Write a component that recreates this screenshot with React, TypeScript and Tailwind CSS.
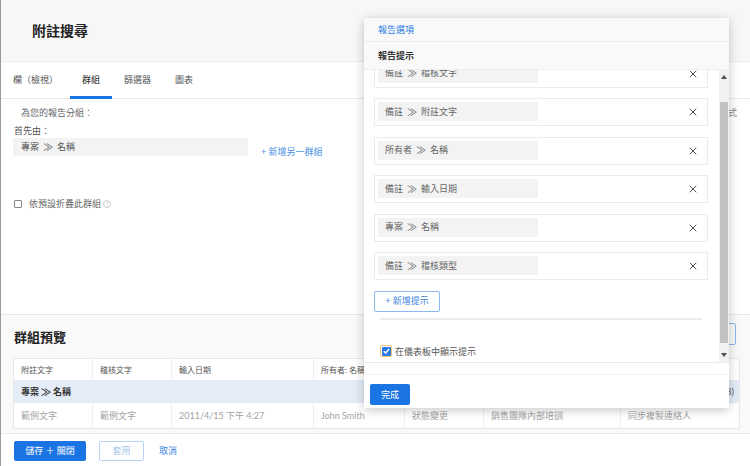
import { X } from "lucide-react";

const BLUE = "bg-[#1b74e4]";

const HINTS = [
  ["備註", "稽核文字"],
  ["備註", "附註文字"],
  ["所有者", "名稱"],
  ["備註", "輸入日期"],
  ["專案", "名稱"],
  ["備註", "稽核類型"],
];

const COLS = ["附註文字", "稽核文字", "輸入日期", "所有者: 名稱", "稽核類型", "專案: 名稱", "主旨"];
const ROW = ["範例文字", "範例文字", "2011/4/15 下午 4:27", "John Smith", "狀態變更", "銷售團隊內部培訓", "同步複製連絡人"];

function Path({ a, b }: { a: string; b: string }) {
  return (
    <span className="flex items-center">
      {a}
      <span className="px-[4px] text-[10px] leading-none font-['Noto_Sans_CJK_TC',sans-serif]">≫</span>
      {b}
    </span>
  );
}

function Tabs() {
  const tabs = ["欄（檢視）", "群組", "篩選器", "圖表"];
  return (
    <nav className="h-[37px] shrink-0 flex border-b border-[#e9e9e9] bg-white">
      {tabs.map((t, i) => (
        <div
          key={t}
          className={`relative h-full flex items-center px-3 text-[9px] ${i === 1 ? "text-[#222]" : "text-[#555]"}`}
        >
          {t}
          {i === 1 && <span className="absolute left-0 right-0 bottom-[-1px] h-[3px] bg-[#1b74e4]" />}
        </div>
      ))}
    </nav>
  );
}

function Triangle({ up }: { up?: boolean }) {
  return (
    <svg width="6" height="4" viewBox="0 0 6 4">
      <path d={up ? "M0 4 L3 0 L6 4 Z" : "M0 0 L6 0 L3 4 Z"} fill="#505050" />
    </svg>
  );
}

function OptionsPanel() {
  return (
    <div className="absolute left-[363px] top-[18px] w-[365px] h-[390px] bg-white flex flex-col shadow-[0_2px_10px_rgba(0,0,0,0.22)]">
      <div className="h-[24px] shrink-0 bg-[#f9f9f9] border-b border-[#ececec] flex items-center pl-[14px] text-[9px] text-[#2a7ae2]">
        報告選項
      </div>
      <div className="h-[28px] shrink-0 bg-[#f9f9f9] border-b border-[#efefef] flex items-center pl-[14px] text-[9px] font-bold text-[#333]">
        報告提示
      </div>

      <div className="h-[292px] shrink-0 flex">
        <div className="flex-1 overflow-hidden pl-[10px] pr-[11px]">
          <div className="mt-[-10.5px] flex flex-col gap-[10.5px]">
            {HINTS.map(([a, b]) => (
              <div key={a + b} className="h-[28px] border border-[#ebebeb] flex items-start justify-between pt-[3px] pl-[3px] pr-[8px]">
                <div className="w-[160px] h-[19px] bg-[#f3f3f3] flex items-center pl-[7px] text-[9px] text-[#666]">
                  <Path a={a} b={b} />
                </div>
                <X size={12} strokeWidth={1.7} className="text-[#333] mt-[4px]" />
              </div>
            ))}
          </div>
          <button className="mt-[10.5px] w-[66px] h-[21px] border border-[#8cb8ef] rounded-[2px] text-[9px] text-[#3a85e0] flex items-center justify-center">
            + 新增提示
          </button>
          <div className="mt-[6px] ml-[6px] w-[322px] h-[2px] bg-[#ececec]" />
          <div className="mt-[25px] ml-[6px] flex items-center gap-[3px] text-[9px] text-[#555]">
            <span className="w-[12px] h-[12px] rounded-[2px] border border-[#f2c46e] flex items-center justify-center">
              <span className="w-[9px] h-[9px] rounded-[1px] bg-[#2a7ae2] flex items-center justify-center">
                <svg width="7" height="6" viewBox="0 0 7 6">
                  <path d="M0.8 3.2 L2.7 5 L6.2 0.9" fill="none" stroke="white" strokeWidth="1.4" />
                </svg>
              </span>
            </span>
            在儀表板中顯示提示
          </div>
        </div>
        <div className="w-[10px] bg-[#f1f1f1] flex flex-col items-center">
          <div className="h-[14px] flex items-center justify-center"><Triangle up /></div>
          <div className="h-[18px]" />
          <div className="w-[8px] h-[241px] bg-[#c1c1c1]" />
          <div className="flex-1" />
          <div className="h-[14px] flex items-center justify-center"><Triangle /></div>
        </div>
      </div>

      <div className="h-[12px] shrink-0 border-t border-[#ebebeb]" />
      <div className="flex-1 border-t border-[#f0f0f0] pl-[6px] pt-[5px]">
        <button className={`w-[40px] h-[21px] ${BLUE} rounded-[2px] text-[9px] text-white`}>完成</button>
      </div>
    </div>
  );
}

export default function App() {
  return (
    <div className="relative w-[750px] h-[466px] overflow-hidden bg-white border-l border-[#9a9a9a] flex flex-col font-['Lato','Noto_Sans_CJK_TC',sans-serif]">
      <header className="h-[62px] shrink-0 bg-[#f7f7f7] border-b border-[#ececec] flex items-center pl-[31px]">
        <h1 className="text-[14px] font-bold text-[#222]">附註搜尋</h1>
      </header>

      <Tabs />

      <section className="h-[215px] shrink-0 bg-white">
        <div className="flex justify-between pt-[8px] pl-[20px] pr-[13px] text-[9px] leading-[12px] text-[#666]">
          <span>為您的報告分組：</span>
          <span className="text-[#888]">切換到文字模式</span>
        </div>
        <p className="mt-[6px] pl-[13px] text-[9px] leading-[12px] text-[#555]">首先由：</p>
        <div className="mt-[1px] pl-[12px] flex items-start gap-[13px]">
          <div className="w-[235px] h-[18px] bg-[#f3f3f3] flex items-center pl-[8px] text-[9px] text-[#555]">
            <Path a="專案" b="名稱" />
          </div>
          <span className="mt-[8px] text-[9px] leading-[12px] text-[#4a8fe3]">+ 新增另一群組</span>
        </div>
        <div className="mt-[40px] pl-[13px] flex items-center gap-[7px] text-[9px] leading-[12px] text-[#666]">
          <span className="w-[8px] h-[8px] border border-[#888] rounded-[1px]" />
          <span className="flex items-center gap-[2px]">
            依預設折疊此群組
            <span className="w-[8px] h-[8px] rounded-full border border-[#ccc] text-[6px] leading-none text-[#bbb] flex items-center justify-center">?</span>
          </span>
        </div>
      </section>

      <section className="h-[119px] shrink-0 bg-[#f9f9f9] border-t border-[#e9e9e9]">
        <div className="h-[30px] pt-[8px] pl-[13px] pr-[14px] flex items-start justify-between">
          <h2 className="mt-[5px] text-[13px] leading-[18px] font-bold text-[#222]">群組預覽</h2>
          <button className="w-[60px] h-[22px] border border-[#8cb8ef] rounded-[2px] text-[9px] text-[#3a85e0]">編輯</button>
        </div>
        <div className="mt-[13px] ml-[12px] w-[727px] border border-[#e8e8e8] bg-white">
          <div className="h-[21px] grid grid-cols-[79px_79px_142px_91px_79px_137px_1fr]">
            {COLS.map((c) => (
              <div key={c} className="border-r border-[#eee] last:border-r-0 flex items-center pl-[7px] text-[8px] text-[#555]">{c}</div>
            ))}
          </div>
          <div className="h-[23px] bg-[#e3ecf7] flex items-center justify-between pl-[7px] pr-[5px] text-[9px] font-bold text-[#333]">
            <span className="flex items-center">專案<span className="px-[2px] text-[10px] leading-none font-['Noto_Sans_CJK_TC',sans-serif]">≫</span>名稱</span>
            <span className="font-normal text-[#555]">(3)</span>
          </div>
          <div className="h-[25px] grid grid-cols-[79px_79px_142px_91px_79px_137px_1fr]">
            {ROW.map((c, i) => (
              <div key={i} className="border-r border-[#eee] last:border-r-0 flex items-center pl-[7px] text-[9px] text-[#a3a3a3]">{c}</div>
            ))}
          </div>
        </div>
      </section>

      <footer className="flex-1 bg-white border-t border-[#e9e9e9] pt-[7px] pl-[13px] flex items-start">
        <button className={`w-[72px] h-[20px] ${BLUE} rounded-[2px] text-[9px] text-white`}>儲存 ＋ 關閉</button>
        <button className="ml-[13px] w-[45px] h-[20px] border border-[#b7d2f3] rounded-[2px] text-[9px] text-[#a5c4ec]">套用</button>
        <button className="ml-[15px] h-[20px] text-[9px] text-[#3b86e0]">取消</button>
      </footer>

      <OptionsPanel />
    </div>
  );
}
